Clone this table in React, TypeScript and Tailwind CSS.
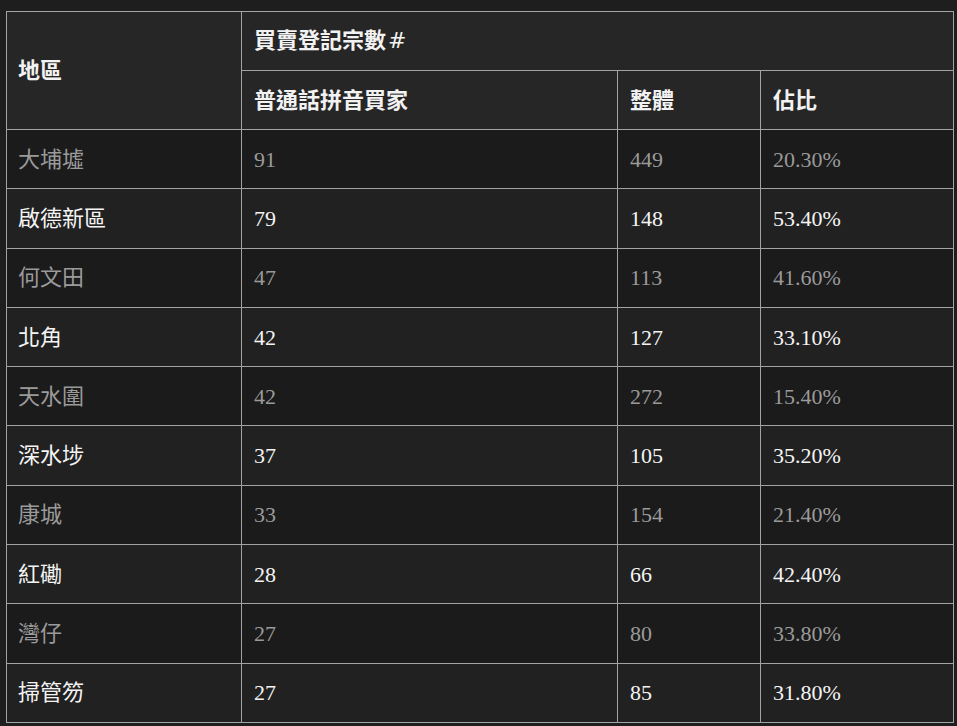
import React from "react";

const rows: [string, string, string, string][] = [
  ["大埔墟", "91", "449", "20.30%"],
  ["啟德新區", "79", "148", "53.40%"],
  ["何文田", "47", "113", "41.60%"],
  ["北角", "42", "127", "33.10%"],
  ["天水圍", "42", "272", "15.40%"],
  ["深水埗", "37", "105", "35.20%"],
  ["康城", "33", "154", "21.40%"],
  ["紅磡", "28", "66", "42.40%"],
  ["灣仔", "27", "80", "33.80%"],
  ["掃管笏", "27", "85", "31.80%"],
];

export default function App() {
  const font = {
    fontFamily: '"Liberation Serif", "Noto Sans CJK TC", serif',
  };
  return (
    <div className="w-[957px] h-[726px] bg-[#1e1e1e] overflow-hidden pt-[11px] pl-[6px]">
      <table
        className="border-collapse table-fixed w-[947px] text-[22px]"
        style={font}
      >
        <colgroup>
          <col className="w-[235px]" />
          <col className="w-[376px]" />
          <col className="w-[143px]" />
          <col className="w-[193px]" />
        </colgroup>
        <thead>
          <tr className="h-[59px] bg-[#262626]">
            <th
              rowSpan={2}
              className="border border-[#a3a3a3] text-left align-middle pl-[11px] font-bold text-[#f2f2f2]"
            >
              地區
            </th>
            <th
              colSpan={3}
              className="border border-[#a3a3a3] text-left align-middle pl-[12px] pb-[2px] font-bold text-[#f2f2f2]"
            >
              買賣登記宗數
              <span className="font-normal pl-[2px] [font-family:'DejaVu_Sans',sans-serif]">#</span>
            </th>
          </tr>
          <tr className="h-[59px] bg-[#262626]">
            <th className="border border-[#a3a3a3] text-left align-middle pl-[12px] font-bold text-[#f2f2f2]">
              普通話拼音買家
            </th>
            <th className="border border-[#a3a3a3] text-left align-middle pl-[12px] font-bold text-[#f2f2f2]">
              整體
            </th>
            <th className="border border-[#a3a3a3] text-left align-middle pl-[12px] font-bold text-[#f2f2f2]">
              佔比
            </th>
          </tr>
        </thead>
        <tbody>
          {rows.map((r, i) => {
            const odd = i % 2 === 0;
            const rowCls = odd
              ? "h-[59.3px] bg-[#1b1b1b] text-[#9a9a9a]"
              : "h-[59.3px] bg-[#212121] text-[#f4f4f4]";
            return (
              <tr key={i} className={rowCls}>
                <td className="border border-[#a3a3a3] pl-[11px] align-middle">
                  {r[0]}
                </td>
                <td className="border border-[#a3a3a3] pl-[12px] align-middle">
                  {r[1]}
                </td>
                <td className="border border-[#a3a3a3] pl-[12px] align-middle">
                  {r[2]}
                </td>
                <td className="border border-[#a3a3a3] pl-[12px] align-middle">
                  {r[3]}
                </td>
              </tr>
            );
          })}
        </tbody>
      </table>
    </div>
  );
}
